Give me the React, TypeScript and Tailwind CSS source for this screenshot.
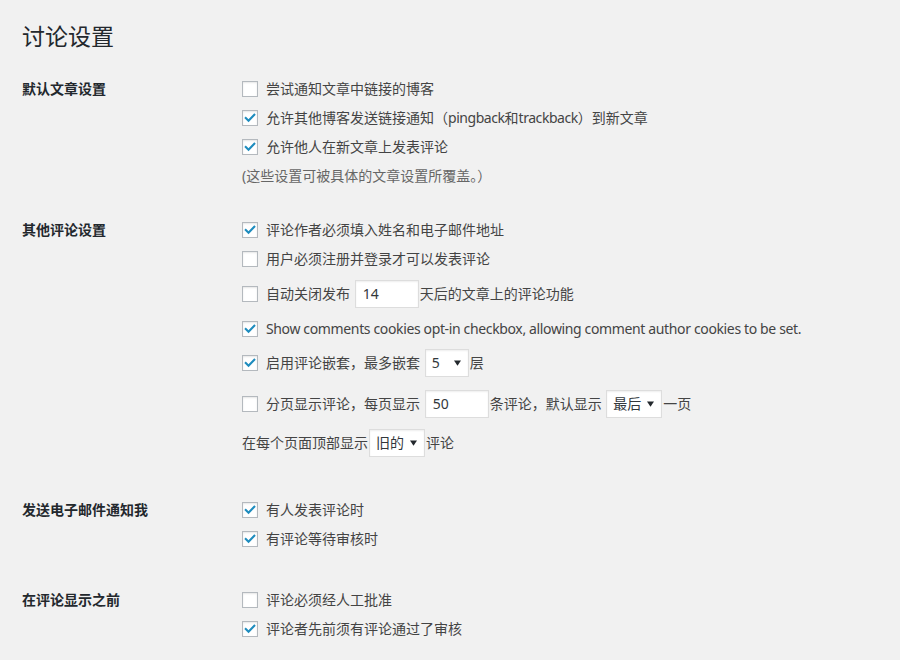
import type { ReactNode } from "react";

const font = { fontFamily: '"Noto Sans", "Noto Sans CJK SC", sans-serif' };

function Checkbox({ checked }: { checked?: boolean }) {
  return (
    <span className="mr-[8px] flex h-[16px] w-[16px] shrink-0 items-center justify-center border border-[#b4b9be] bg-white shadow-[inset_0_1px_2px_rgba(0,0,0,0.1)]">
      {checked ? (
        <svg viewBox="0 0 16 16" className="h-[16px] w-[16px]">
          <path
            d="M3.2 8.1 L6.3 11.1 L12.9 4.3"
            fill="none"
            stroke="#1e8cbe"
            strokeWidth="2.4"
            strokeLinecap="square"
          />
        </svg>
      ) : null}
    </span>
  );
}

function TextInput({ value }: { value: string }) {
  return (
    <span className="mx-[1px] flex h-[28px] w-[64px] items-center border border-[#ddd] bg-white px-[7px] text-[#32373c] shadow-[inset_0_1px_2px_rgba(0,0,0,0.07)]">
      {value}
    </span>
  );
}

function Select({ value, width }: { value: string; width: string }) {
  return (
    <span
      className={`mx-[1px] flex h-[28px] items-center justify-between border border-[#ddd] bg-white pl-[6px] pr-[7px] text-[#32373c] shadow-[inset_0_1px_2px_rgba(0,0,0,0.07)] ${width}`}
    >
      <span>{value}</span>
      <svg viewBox="0 0 8 6" className="h-[6px] w-[7px]">
        <path d="M0 0 L8 0 L4 6 Z" fill="#23282d" />
      </svg>
    </span>
  );
}

function Row({
  checked,
  box = true,
  height = "h-[29px]",
  children,
}: {
  checked?: boolean;
  box?: boolean;
  height?: string;
  children: ReactNode;
}) {
  return (
    <div className={`flex items-center ${height}`}>
      {box ? <Checkbox checked={checked} /> : null}
      <span className="flex items-center whitespace-pre">{children}</span>
    </div>
  );
}

function Section({
  label,
  className = "",
  children,
}: {
  label: string;
  className?: string;
  children: ReactNode;
}) {
  return (
    <section className={`grid grid-cols-[220px_1fr] ${className}`}>
      <div className="flex h-[29px] items-center font-semibold text-[#23282d]">
        {label}
      </div>
      <div>{children}</div>
    </section>
  );
}

export default function App() {
  return (
    <div
      className="min-h-[660px] w-full bg-[#f1f1f1] pl-[22px] text-[14px] leading-[20px] text-[#444]"
      style={font}
    >
      <div className="pt-[20px]">
        <h1 className="text-[23px] leading-[32px] font-normal text-[#23282d]">讨论设置</h1>
      </div>

      <Section label="默认文章设置" className="mt-[22px]">
        <Row>尝试通知文章中链接的博客</Row>
        <Row checked>
          允许其他博客发送链接通知（<span className="tracking-[-0.45px]">pingback</span>和
          <span className="tracking-[-0.45px]">trackback</span>）到新文章
        </Row>
        <Row checked>允许他人在新文章上发表评论</Row>
        <Row box={false}>
          <span className="text-[#666]">(这些设置可被具体的文章设置所覆盖。）</span>
        </Row>
      </Section>

      <Section label="其他评论设置" className="mt-[25px]">
        <Row checked>评论作者必须填入姓名和电子邮件地址</Row>
        <Row>用户必须注册并登录才可以发表评论</Row>
        <Row height="h-[41px]">
          自动关闭发布 <TextInput value="14" />天后的文章上的评论功能
        </Row>
        <Row checked>
          <span className="tracking-[-0.36px]">
            Show comments cookies opt-in checkbox, allowing comment author cookies to be set.
          </span>
        </Row>
        <Row checked height="h-[39px]">
          启用评论嵌套，最多嵌套 <Select value="5" width="w-[44px]" />层
        </Row>
        <Row height="h-[43px]">
          分页显示评论，每页显示 <TextInput value="50" />条评论，默认显示 <Select value="最后" width="w-[56px]" />一页
        </Row>
        <Row box={false} height="h-[35px]">
          在每个页面顶部显示<Select value="旧的" width="w-[56px]" />评论
        </Row>
      </Section>

      <Section label="发送电子邮件通知我" className="mt-[35px]">
        <Row checked>有人发表评论时</Row>
        <Row checked>有评论等待审核时</Row>
      </Section>

      <Section label="在评论显示之前" className="mt-[32px]">
        <Row>评论必须经人工批准</Row>
        <Row checked>评论者先前须有评论通过了审核</Row>
      </Section>
    </div>
  );
}
